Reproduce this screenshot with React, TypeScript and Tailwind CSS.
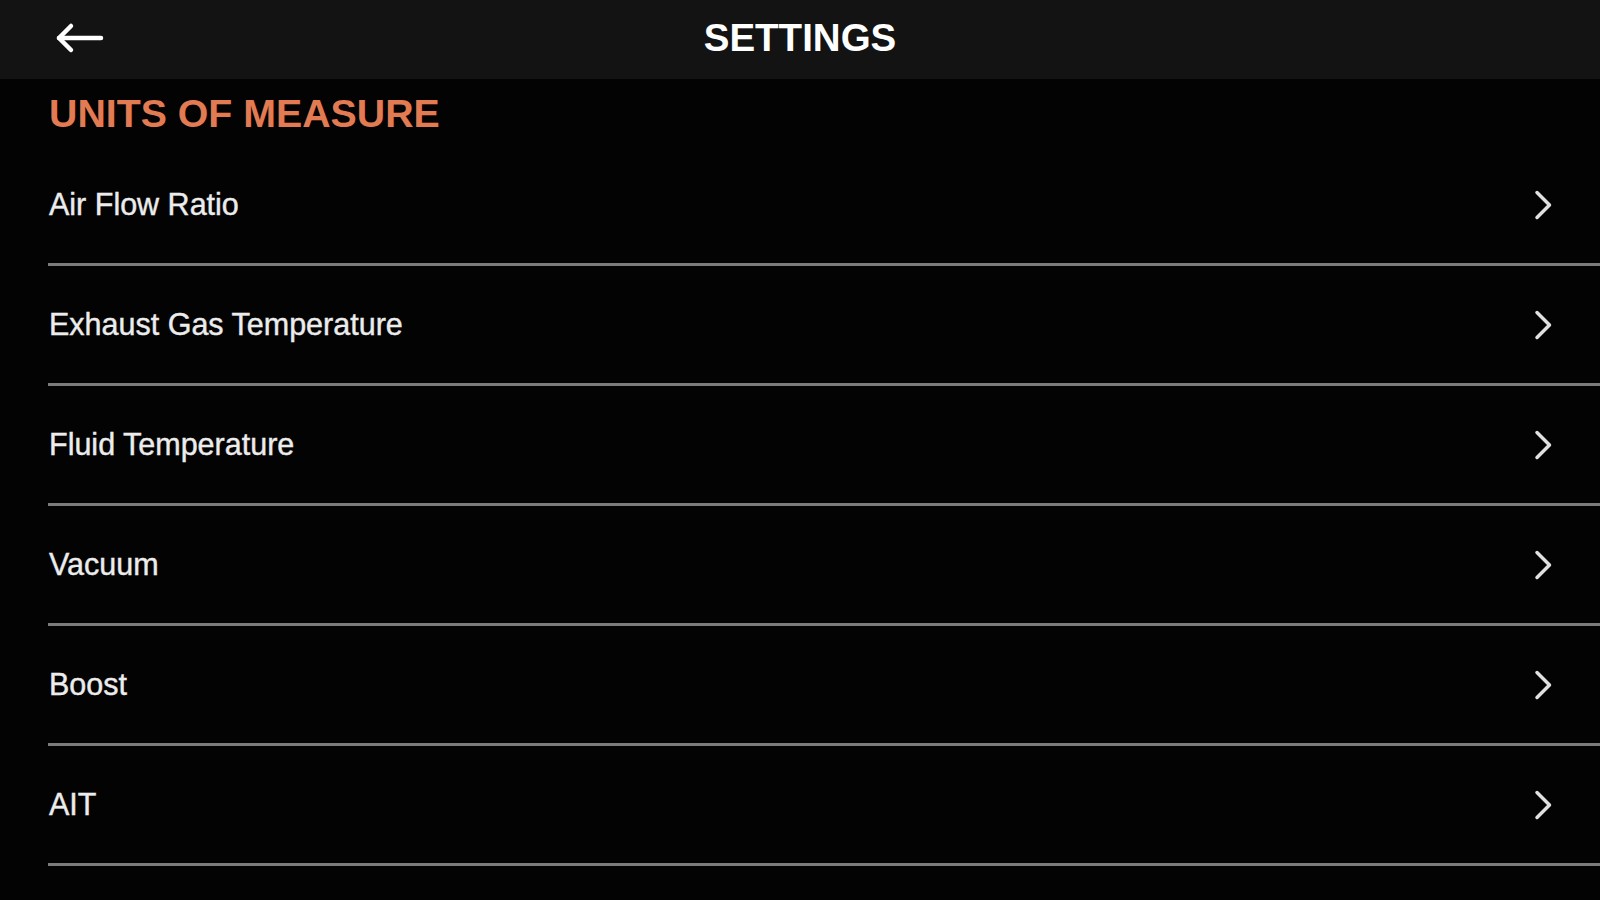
import React from 'react'

const units = [
  'Air Flow Ratio',
  'Exhaust Gas Temperature',
  'Fluid Temperature',
  'Vacuum',
  'Boost',
  'AIT',
]

const BackArrow = () => (
  <svg width="50" height="32" viewBox="0 0 50 32" fill="none" stroke="currentColor" strokeWidth="4.5" strokeLinecap="round" strokeLinejoin="round">
    <path d="M47 16H5" />
    <path d="M17 4L5 16l12 12" />
  </svg>
)

const Chevron = () => (
  <svg width="22" height="30" viewBox="0 0 22 30" fill="none" stroke="currentColor" strokeWidth="3.5" strokeLinecap="round" strokeLinejoin="round">
    <path d="M5 2.5l12.5 12.5L5 27.5" />
  </svg>
)

const App = () => {
  return (
    <div className="w-[1600px] h-[900px] bg-[#030303] overflow-hidden" style={{ fontFamily: '"Liberation Sans", Arial, sans-serif' }}>
      <header className="h-[79px] bg-[#131313] flex items-center relative">
        <button className="ml-[54px] mb-[3px] text-white flex items-center">
          <BackArrow />
        </button>
        <h1 className="absolute left-0 right-0 top-[19px] text-center text-[38.5px] font-bold text-white leading-none">
          SETTINGS
        </h1>
      </header>

      <h2 className="mt-[15px] ml-[49px] text-[39.3px] font-bold leading-none text-[#e27a52]">
        UNITS OF MEASURE
      </h2>

      <ul className="mt-[13px] ml-[48px]">
        {units.map((u) => (
          <li key={u} className="h-[120px] border-b-[3px] border-[#7b7b7b] flex items-center justify-between pr-[46px]">
            <span className="text-[30.5px] text-[#ececec] pl-[1px] [-webkit-text-stroke:0.4px_#ececec]">{u}</span>
            <span className="text-[#e0e0e0] flex items-center">
              <Chevron />
            </span>
          </li>
        ))}
      </ul>
    </div>
  )
}

export default App
